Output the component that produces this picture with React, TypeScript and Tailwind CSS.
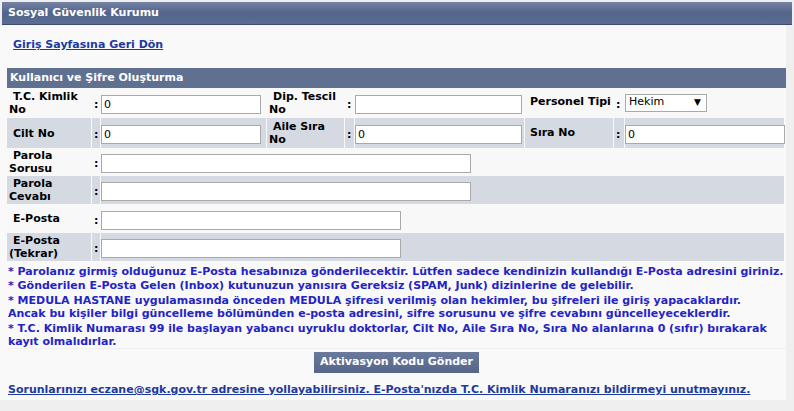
import React from 'react';

const font = "font-['DejaVu_Sans',Verdana,sans-serif]";

const Label: React.FC<{ lines: string[] }> = ({ lines }) => (
  <div className="font-bold text-[11px] leading-[13px] text-black pl-[2px]">
    {lines.map((l, i) => (
      <div key={i} className={i === 0 ? 'pl-[4px]' : ''}>{l}</div>
    ))}
  </div>
);

const Colon = () => <span className="font-bold text-[11px] pl-[2px]">:</span>;

const TextInput: React.FC<{ w: string; value?: string }> = ({ w, value = '' }) => (
  <input
    defaultValue={value}
    className={`${w} h-[19px] bg-white border border-[#a9a9a9] px-[2px] text-[11px] text-black outline-none ${font}`}
  />
);

const App: React.FC = () => {
  const light = 'bg-[#f8f8f8]';
  const gray = 'bg-[#d5dae2]';

  return (
    <div className={`w-[794px] h-[411px] bg-[#efefef] pt-[2px] ${font} overflow-hidden`}>
      <div className="w-[790px] ml-[2px] h-[23px] bg-gradient-to-b from-[#7482a3] via-[#53648a] to-[#5c6d93] border-b border-[#3e4b6a] flex items-center pl-[6px]">
        <span className="text-white font-bold text-[11px]">Sosyal Güvenlik Kurumu</span>
      </div>
      <div className="w-[786px] h-[375px] bg-[#f9f9f9] pl-[7px]">
        <div className="pt-[6px] pl-[6px] h-[43px]">
          <a href="#" className="text-[#1d3a9e] underline font-bold text-[11px]">Giriş Sayfasına Geri Dön</a>
        </div>
        <div className="w-[779px] h-[20px] bg-[#5f7091] flex items-center pl-[3px]">
          <span className="text-white font-bold text-[11px]">Kullanıcı ve Şifre Oluşturma</span>
        </div>
        <table className="w-[779px] table-fixed border-separate border-spacing-[1px] -mx-[1px] -mt-[1px]">
          <colgroup>
            <col className="w-[84px]" />
            <col className="w-[8px]" />
            <col className="w-[165px]" />
            <col className="w-[77px]" />
            <col className="w-[9px]" />
            <col className="w-[169px]" />
            <col className="w-[88px]" />
            <col className="w-[10px]" />
            <col />
          </colgroup>
          <tbody>
            <tr className="h-[29px]">
              <td className={light}><Label lines={['T.C. Kimlik', 'No']} /></td>
              <td className={light}><Colon /></td>
              <td className={light}><TextInput w="w-[160px]" value="0" /></td>
              <td className={light}><Label lines={['Dip. Tescil', 'No']} /></td>
              <td className={light}><Colon /></td>
              <td className={light}><TextInput w="w-[167px]" /></td>
              <td className={light}><div className="font-bold text-[11px] pl-[5px]">Personel Tipi</div></td>
              <td className={light}><Colon /></td>
              <td className={light}>
                <div className="w-[82px] h-[18px] bg-white border border-[#a9a9a9] flex items-center justify-between px-[3px] text-[11px]">
                  <span>Hekim</span>
                  <span className="text-[9px] pr-[2px]">▼</span>
                </div>
              </td>
            </tr>
            <tr className="h-[30px]">
              <td className={gray}><Label lines={['Cilt No']} /></td>
              <td className={gray}><Colon /></td>
              <td className={gray}><TextInput w="w-[160px]" value="0" /></td>
              <td className={gray}><Label lines={['Aile Sıra', 'No']} /></td>
              <td className={gray}><Colon /></td>
              <td className={gray}><TextInput w="w-[167px]" value="0" /></td>
              <td className={gray}><div className="font-bold text-[11px] pl-[5px]">Sıra No</div></td>
              <td className={gray}><Colon /></td>
              <td className={gray}><TextInput w="w-[160px]" value="0" /></td>
            </tr>
            <tr className="h-[26px]">
              <td className={light}><Label lines={['Parola', 'Sorusu']} /></td>
              <td className={light}><Colon /></td>
              <td className={light} colSpan={7}><TextInput w="w-[370px]" /></td>
            </tr>
            <tr className="h-[28px]">
              <td className={gray}><Label lines={['Parola', 'Cevabı']} /></td>
              <td className={gray}><Colon /></td>
              <td className={gray} colSpan={7}><TextInput w="w-[370px]" /></td>
            </tr>
            <tr className="h-[27px]">
              <td className={light}><Label lines={['E-Posta']} /></td>
              <td className={light}><Colon /></td>
              <td className={light} colSpan={7}><TextInput w="w-[300px]" /></td>
            </tr>
            <tr className="h-[28px]">
              <td className={gray}><Label lines={['E-Posta', '(Tekrar)']} /></td>
              <td className={gray}><Colon /></td>
              <td className={gray} colSpan={7}><TextInput w="w-[300px]" /></td>
            </tr>
          </tbody>
        </table>
        <div className="text-[#2424c4] font-bold text-[11px] leading-[13px] pl-[1px] pt-[3px]">
          <div>* Parolanız girmiş olduğunuz E-Posta hesabınıza gönderilecektir. Lütfen sadece kendinizin kullandığı E-Posta adresini giriniz.</div>
          <div className="mt-[1px]">* Gönderilen E-Posta Gelen (Inbox) kutunuzun yanısıra Gereksiz (SPAM, Junk) dizinlerine de gelebilir.</div>
          <div className="mt-[2px]">* MEDULA HASTANE uygulamasında önceden MEDULA şifresi verilmiş olan hekimler, bu şifreleri ile giriş yapacaklardır.</div>
          <div>Ancak bu kişiler bilgi güncelleme bölümünden e-posta adresini, sifre sorusunu ve şifre cevabını güncelleyeceklerdir.</div>
          <div className="mt-[2px]">* T.C. Kimlik Numarası 99 ile başlayan yabancı uyruklu doktorlar, Cilt No, Aile Sıra No, Sıra No alanlarına 0 (sıfır) bırakarak kayıt olmalıdırlar.</div>
        </div>
        <div className="w-[779px] h-[28px] flex items-center justify-center border-t border-[#f0f0f0]">
          <button className="h-[21px] px-[6px] bg-gradient-to-b from-[#6a7a9c] to-[#56668a] text-white font-bold text-[11px]">
            Aktivasyon Kodu Gönder
          </button>
        </div>
        <div className="pt-[5px] pl-[1px] leading-[14px]">
          <a href="#" className="text-[#1d3a9e] underline font-bold text-[11px]">
            Sorunlarınızı eczane@sgk.gov.tr adresine yollayabilirsiniz. E-Posta'nızda T.C. Kimlik Numaranızı bildirmeyi unutmayınız.
          </a>
        </div>
      </div>
    </div>
  );
};

export default App;
